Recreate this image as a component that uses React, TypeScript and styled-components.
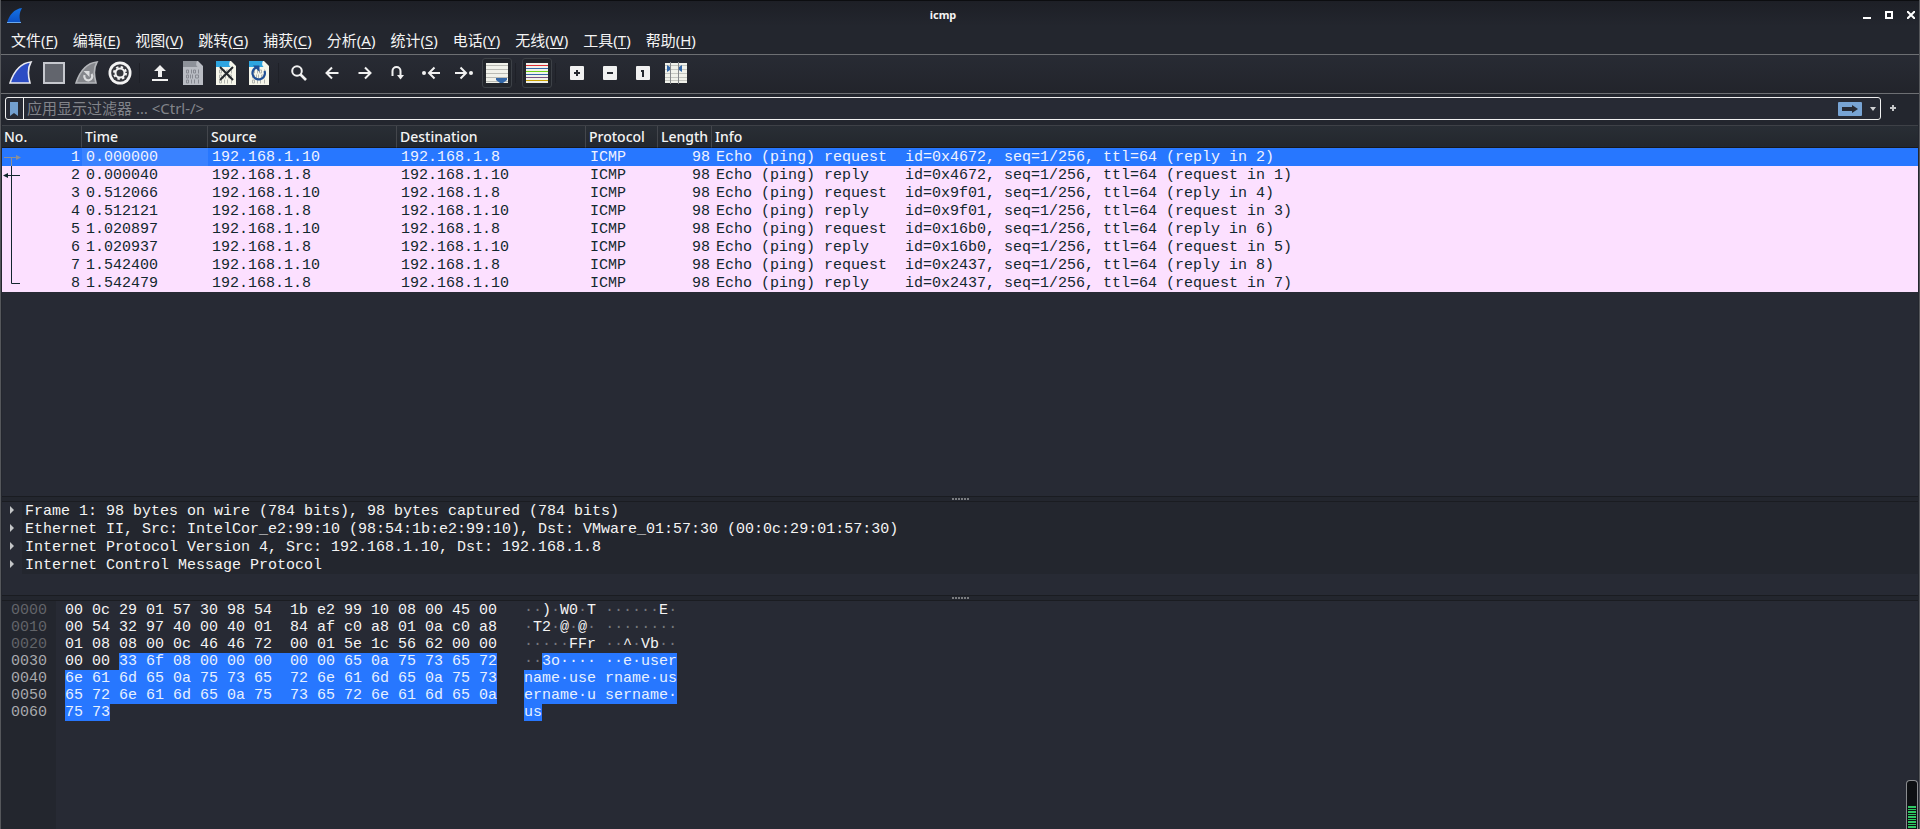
import React from "react";
import styled, { createGlobalStyle, css } from "styled-components";

const ui = `"Noto Sans", "Noto Sans CJK SC", sans-serif`;
const mono = `"Liberation Mono", monospace`;
const base = "#272a34";
const chrome = "#23262e";
const highlight = "#2777ff";

const GlobalStyle = createGlobalStyle`
  * { box-sizing: border-box; }
  html, body { margin: 0; background: ${chrome}; }
  button { font: inherit; color: inherit; background: none; border: 0; padding: 0; }
  svg { display: block; }
`;

const Window = styled.main`
  min-height: 100vh;
  display: flex;
  flex-direction: column;
  border-left: 1px solid #55575b;
  border-right: 1px solid #55575b;
  background: ${chrome};
  color: #f4f4f4;
  font: 15px/20px ${ui};
  overflow: hidden;
`;

const TitleBar = styled.header`
  height: 26px;
  display: flex;
  align-items: center;
  padding: 3px 4px 0 5px;
  border-top: 1px solid #0c0d10;
  background: linear-gradient(#1d1f26, ${chrome});
`;

const Title = styled.h1`
  flex: 1;
  margin: 0;
  text-align: center;
  font: bold 11px/16px ${ui};
`;

const WindowButtons = styled.div`
  display: flex;
  gap: 14px;
`;

const WindowButton = styled.button`
  width: 8px;
  height: 8px;
`;

const MenuBar = styled.nav`
  height: 28px;
  display: flex;
  gap: 15px;
  padding: 4px 10px 0;
`;

const MenuItem = styled.button`
  height: 20px;
  white-space: nowrap;
  line-height: 20px;
  u {
    text-underline-offset: 2px;
    text-decoration-skip-ink: none;
  }
`;

const ToolBar = styled.div`
  height: 40px;
  display: flex;
  align-items: center;
  padding: 0 3px 2px;
  border: 1px solid #6d6f73;
  border-width: 1px 0;
  background: linear-gradient(#282b34, #22242b);
`;

const ToolButton = styled.button<{ $pressed?: boolean }>`
  width: ${(p) => (p.$pressed ? 30 : 33)}px;
  height: 30px;
  display: grid;
  place-items: center;
  ${(p) =>
    p.$pressed &&
    css`
      margin-left: 2px;
      border: 1px solid #3d4147;
      border-radius: 3px;
      background: #22252b;
    `}
`;

const ToolSeparator = styled.span<{ $narrow?: boolean }>`
  width: ${(p) => (p.$narrow ? 8 : 7)}px;
  height: 20px;
  background: linear-gradient(90deg, transparent 3px, #1e2027 3px, #1e2027 4px, transparent 4px);
`;

const FilterBar = styled.div`
  height: 31px;
  display: flex;
  align-items: flex-start;
  gap: 8px;
  padding: 3px 22px 0 4px;
`;

const FilterBox = styled.div`
  flex: 1;
  height: 23px;
  display: flex;
  align-items: center;
  border: 1px solid #f0f0f0;
  border-radius: 3px;
  background: ${base};
`;

const BookmarkButton = styled.button`
  width: 18px;
  height: 21px;
  padding-right: 2px;
  display: grid;
  place-items: center;
  border-right: 1px solid #f0f0f0;
`;

const FilterInput = styled.input`
  flex: 1;
  min-width: 0;
  height: 21px;
  padding: 0 3px 2px;
  border: 0;
  outline: 0;
  background: none;
  color: #f4f4f4;
  font: 15px/20px ${ui};
  &::placeholder {
    color: #82848a;
    opacity: 1;
  }
`;

const FilterAction = styled.button<{ $width: number }>`
  width: ${(p) => p.$width}px;
  height: 21px;
  display: grid;
  place-items: center;
`;

const HistoryButton = styled(FilterAction)`
  padding-left: 4px;
`;

const PacketPane = styled.section`
  flex: 371 1 0;
  min-height: 168px;
  margin: 0 1px;
  border-top: 1px solid #3e4147;
  background: ${base};
  position: relative;
`;

const PacketTable = styled.table`
  width: 100%;
  table-layout: fixed;
  border-collapse: separate;
  border-spacing: 0;
  font: 15px/17px ${mono};
`;

const ColumnHeader = styled.th`
  height: 22px;
  padding: 0 3px;
  border-right: 1px solid #43464c;
  border-bottom: 1px solid #17191d;
  background: linear-gradient(#292e35, #23272d);
  text-align: left;
  font: 500 14px/20px ${ui};
  white-space: nowrap;
  &:first-child {
    padding-left: 2px;
  }
  &:last-child {
    border-right: 0;
  }
`;

const PacketRow = styled.tr<{ $selected: boolean }>`
  background: ${(p) => (p.$selected ? highlight : "#fce0ff")};
  color: ${(p) => (p.$selected ? "#f0f2ff" : "#12272e")};
`;

const PacketCell = styled.td<{ $right?: boolean; $current?: boolean }>`
  height: 18px;
  padding: ${(p) => (p.$right ? "1px 2px 0 0" : "1px 0 0 4px")};
  text-align: ${(p) => (p.$right ? "right" : "left")};
  white-space: pre;
  background: ${(p) => (p.$current ? "#3a82ff" : "none")};
`;

const RelationLines = styled.svg`
  position: absolute;
  left: 0;
  top: 22px;
`;

const Splitter = styled.div`
  height: 6px;
  margin: 0 1px;
  display: grid;
  place-items: center;
  border: 1px solid #1a1c21;
  border-width: 1px 0;
  background: ${chrome};
`;

const DetailPane = styled.section`
  flex: 93 1 0;
  min-height: 72px;
  margin: 0 1px;
  background: ${base};
`;

const DetailList = styled.ul`
  margin: 0;
  padding: 0;
  list-style: none;
  font: 15px/17px ${mono};
`;

const DetailItem = styled.li`
  display: flex;
`;

const ExpandButton = styled.button`
  width: 20px;
  padding-bottom: 2px;
  display: grid;
  place-items: center;
`;

const DetailText = styled.span`
  flex: 1;
  padding: 1px 0 0 3px;
  background: #23262e;
  white-space: pre;
`;

const BytesPane = styled.section`
  flex: 228 1 0;
  min-height: 120px;
  margin: 0 1px;
  display: flex;
  background: ${base};
  font: 15px/17px ${mono};
  white-space: pre;
`;

const OffsetColumn = styled.div`
  width: 54px;
  padding: 1px 0 0 9px;
  background: ${chrome};
`;

const Offset = styled.div<{ $lit: boolean }>`
  color: ${(p) => (p.$lit ? "#a8aaad" : "#626469")};
`;

const HexColumn = styled.div`
  width: 468px;
  padding: 1px 0 0 9px;
`;

const AsciiColumn = styled.div`
  flex: 1;
  padding-top: 1px;
`;

const Marked = styled.span`
  background: ${highlight};
  color: #e6f0ff;
`;

const Faint = styled.span`
  color: #75777c;
`;

const Meter = styled.div`
  position: fixed;
  right: 2px;
  bottom: 0;
  width: 12px;
  height: 49px;
  padding: 25px 1px 0;
  border: 1px solid #8b8d90;
  border-bottom: 0;
  border-radius: 4px 4px 0 0;
  background: #0e1013;
`;

const MeterBars = styled.div`
  height: 23px;
  background: repeating-linear-gradient(#2fc763 0 2px, #0e1013 2px 3px, #2fc763 3px 4px, #0e1013 4px 5px);
`;

/* ---------- icons ---------- */

const fin = "M1 22C5 10 11 2 22 1C18 8 19 15 21 22Z";

const AppIcon = () => (
  <svg width="17" height="17" viewBox="0 0 17 17">
    <defs>
      <linearGradient id="fin" x1="0" y1="0" x2="0" y2="1">
        <stop offset="0" stopColor="#1673e6" />
        <stop offset="1" stopColor="#0a4fc4" />
      </linearGradient>
    </defs>
    <path d="M1 16C3 8 8 2 16 1C13 6 13 11 15 16Z" fill="url(#fin)" />
    <path d="M1 15.500H15" stroke="#6aa9ee" />
  </svg>
);

const StartIcon = () => (
  <svg width="24" height="24" viewBox="0 0 24 24">
    <path d={fin} fill="#2c4cc4" stroke="#e9e9ee" strokeWidth="1.600" />
  </svg>
);

const StopIcon = () => (
  <svg width="24" height="24" viewBox="0 0 24 24">
    <rect x="2" y="2" width="20" height="20" fill="#62656d" stroke="#c6c8ce" strokeWidth="2" />
  </svg>
);

const RestartIcon = () => (
  <svg width="24" height="24" viewBox="0 0 24 24">
    <path d={fin} fill="#85878c" stroke="#b4b6ba" strokeWidth="1.600" />
    <path d="M9.500 14A4 4 0 1 0 16.500 13" fill="none" stroke="#dcdddf" strokeWidth="2.200" />
    <path d="M8.500 10H14.500V16Z" fill="#dcdddf" />
  </svg>
);

const OptionsIcon = () => (
  <svg width="24" height="24" viewBox="0 0 24 24">
    <circle cx="12" cy="12" r="11.500" fill="#f3f3f3" />
    <circle cx="12" cy="12" r="8.800" fill="#34363c" />
    <circle cx="12" cy="12" r="6" fill="none" stroke="#f3f3f3" strokeWidth="2" strokeDasharray="2.400 2.312" />
    <circle cx="12" cy="12" r="4.500" fill="none" stroke="#f3f3f3" strokeWidth="2" />
  </svg>
);

const OpenIcon = () => (
  <svg width="18" height="18" viewBox="0 0 18 18">
    <path d="M9 1L15 7H11V13H7V7H3Z" fill="#f1f1f1" />
    <path d="M1 16H17" stroke="#f1f1f1" strokeWidth="2" />
  </svg>
);

const FileIcon = ({ top, page, mark, children }: { top: string; page: string; mark: string; children?: React.ReactNode }) => (
  <svg width="20" height="24" viewBox="0 0 20 24">
    <path d="M0 0H15L20 5V24H0Z" fill={page} />
    <path d="M0 0H14Q12 5 15 6H0Z" fill={top} />
    <path d="M14 0L20 6H15Q13 4 14 0Z" fill={page} />
    <g fill="none" stroke={mark} strokeWidth="1" opacity="0.8">
      <path d="M3.500 9V12H5.500V9ZM8.500 8.500V12.500M10.500 9V12H12.500V9ZM15.500 8.500V12.500" />
      <path d="M3.500 14V17H5.500V14ZM7.500 13.500V17.500M9.500 13.500V17.500M12.500 14V17H15.500V14Z" />
      <path d="M3.500 19V22H5.500V19ZM8.500 18.500V22.500M11.500 18.500V22.500M15.500 18.500V22.500" />
    </g>
    {children}
  </svg>
);

const SaveIcon = () => <FileIcon top="#8d9199" page="#b9bcc3" mark="#7b7e86" />;

const CloseIcon = () => (
  <FileIcon top="#2ea5e0" page="#f6f6ea" mark="#a3a5a1">
    <path d="M4 6L17 19M17 6L4 19" stroke="#23272b" strokeWidth="2" />
  </FileIcon>
);

const ReloadIcon = () => (
  <FileIcon top="#2ea5e0" page="#f6f6ea" mark="#a3a5a1">
    <path d="M9 6A6.200 6.200 0 1 0 15.500 10" fill="none" stroke="#1f4f96" strokeWidth="2.200" />
    <path d="M4 4.500H10.500V11Z" fill="#1f4f96" />
  </FileIcon>
);

const FindIcon = () => (
  <svg width="18" height="18" viewBox="0 0 18 18" fill="none" stroke="#f1f1f1">
    <circle cx="7" cy="7" r="4.800" strokeWidth="2" />
    <path d="M10.500 10.500L16 16" strokeWidth="2.600" />
  </svg>
);

const Arrow = ({ dot, flip }: { dot?: boolean; flip?: boolean }) => (
  <svg width="20" height="16" viewBox="0 0 20 16">
    <g transform={flip ? "translate(20 0) scale(-1 1)" : undefined} fill="none" stroke="#f1f1f1" strokeWidth="2">
      {dot ? (
        <>
          <path d="M19 8H9M13.500 2.500L8 8L13.500 13.500" />
          <circle cx="3" cy="8" r="2" fill="#f1f1f1" stroke="none" />
        </>
      ) : (
        <path d="M16.500 8H5.500M10 2.500L4.500 8L10 13.500" />
      )}
    </g>
  </svg>
);

const GoToIcon = () => (
  <svg width="16" height="16" viewBox="0 0 16 16">
    <path d="M2.500 11V6A4 4 0 0 1 10.500 6V11" fill="none" stroke="#f1f1f1" strokeWidth="2" />
    <path d="M7 10H14L10.500 14.500Z" fill="#f1f1f1" />
  </svg>
);

const AutoScrollIcon = () => (
  <svg width="22" height="20" viewBox="0 0 22 20">
    <path d="M0 0H22V20H0Z" fill="#f0f1ea" />
    <path d="M0 2.500H22M0 6.500H22M0 10.500H22M0 14.500H22M0 18.500H22" stroke="#b9bab4" />
    <path d="M10 15H21V17L17 20H14L10 17Z" fill="#3367a8" />
  </svg>
);

const ColorizeIcon = () => (
  <svg width="22" height="20" viewBox="0 0 22 20">
    <path d="M0 0H22V20H0Z" fill="#f0f1ea" />
    <path d="M0 2.500H22" stroke="#e02f35" />
    <path d="M0 5.500H22M0 11.500H22" stroke="#3367a8" />
    <path d="M0 8.500H22" stroke="#72d216" />
    <path d="M0 14.500H22" stroke="#755080" />
    <path d="M0 17.500H22" stroke="#c8a000" />
  </svg>
);

const ZoomTile = ({ d }: { d: string }) => (
  <svg width="14" height="14" viewBox="0 0 14 14">
    <rect width="14" height="14" rx="1" fill="#f1f1f1" />
    <path d={d} fill="none" stroke="#25282f" strokeWidth="2" />
  </svg>
);

const ColumnsIcon = () => (
  <svg width="22" height="22" viewBox="0 0 22 22">
    <path d="M0 1H22V21H0Z" fill="#f0f1ea" />
    <path d="M0 3.500H22M0 7.500H22M0 11.500H22M0 15.500H22M0 18.500H22" stroke="#c4c5bf" />
    <path d="M5.500 0V22M13.500 0V22" stroke="#85878a" />
    <path d="M2 3L5 5V8L2 10ZM17 3L14 5V8L17 10Z" fill="#3367a8" />
  </svg>
);

const Grip = () => (
  <svg width="17" height="2" viewBox="0 0 17 2">
    <path d="M0 1H17" stroke="#7a7c80" strokeWidth="2" strokeDasharray="2 1" />
  </svg>
);

/* ---------- data ---------- */

const menus: [string, string][] = [
  ["文件", "F"], ["编辑", "E"], ["视图", "V"], ["跳转", "G"], ["捕获", "C"], ["分析", "A"],
  ["统计", "S"], ["电话", "Y"], ["无线", "W"], ["工具", "T"], ["帮助", "H"],
];

const columns: [string, number | undefined][] = [
  ["No.", 80], ["Time", 126], ["Source", 189], ["Destination", 189], ["Protocol", 72], ["Length", 54], ["Info", undefined],
];

const times = ["0.000000", "0.000040", "0.512066", "0.512121", "1.020897", "1.020937", "1.542400", "1.542479"];
const ids = ["4672", "9f01", "16b0", "2437"];

const packets = times.map((time, i) => {
  const request = i % 2 === 0;
  return {
    no: i + 1,
    time,
    source: request ? "192.168.1.10" : "192.168.1.8",
    destination: request ? "192.168.1.8" : "192.168.1.10",
    info:
      `Echo (ping) ${request ? "request" : "reply  "}  id=0x${ids[i >> 1]}, seq=1/256, ttl=64 ` +
      (request ? `(reply in ${i + 2})` : `(request in ${i})`),
  };
});

const details = [
  "Frame 1: 98 bytes on wire (784 bits), 98 bytes captured (784 bits)",
  "Ethernet II, Src: IntelCor_e2:99:10 (98:54:1b:e2:99:10), Dst: VMware_01:57:30 (00:0c:29:01:57:30)",
  "Internet Protocol Version 4, Src: 192.168.1.10, Dst: 192.168.1.8",
  "Internet Control Message Protocol",
];

/* plain hex, marked hex, plain text, marked text */
const bytes: [string, string, string, string][] = [
  ["00 0c 29 01 57 30 98 54  1b e2 99 10 08 00 45 00", "", "··)·W0·T ······E·", ""],
  ["00 54 32 97 40 00 40 01  84 af c0 a8 01 0a c0 a8", "", "·T2·@·@· ········", ""],
  ["01 08 08 00 0c 46 46 72  00 01 5e 1c 56 62 00 00", "", "·····FFr ··^·Vb··", ""],
  ["00 00 ", "33 6f 08 00 00 00  00 00 65 0a 75 73 65 72", "··", "3o···· ··e·user"],
  ["", "6e 61 6d 65 0a 75 73 65  72 6e 61 6d 65 0a 75 73", "", "name·use rname·us"],
  ["", "65 72 6e 61 6d 65 0a 75  73 65 72 6e 61 6d 65 0a", "", "ername·u sername·"],
  ["", "75 73", "", "us"],
];

const tools: { label: string; icon?: React.ReactNode; pressed?: boolean; narrow?: boolean }[] = [
  { label: "Start", icon: <StartIcon /> },
  { label: "Stop", icon: <StopIcon /> },
  { label: "Restart", icon: <RestartIcon /> },
  { label: "Options", icon: <OptionsIcon /> },
  { label: "" },
  { label: "Open", icon: <OpenIcon /> },
  { label: "Save", icon: <SaveIcon /> },
  { label: "Close", icon: <CloseIcon /> },
  { label: "Reload", icon: <ReloadIcon /> },
  { label: "" },
  { label: "Find", icon: <FindIcon /> },
  { label: "Previous", icon: <Arrow /> },
  { label: "Next", icon: <Arrow flip /> },
  { label: "Go to", icon: <GoToIcon /> },
  { label: "First", icon: <Arrow dot /> },
  { label: "Last", icon: <Arrow dot flip /> },
  { label: "Auto scroll", icon: <AutoScrollIcon />, pressed: true },
  { label: "", narrow: true },
  { label: "Colorize", icon: <ColorizeIcon />, pressed: true },
  { label: "", narrow: true },
  { label: "Zoom in", icon: <ZoomTile d="M4 7H10M7 4V10" /> },
  { label: "Zoom out", icon: <ZoomTile d="M4 7H10" /> },
  { label: "Normal size", icon: <ZoomTile d="M5 5H7V11" /> },
  { label: "Resize columns", icon: <ColumnsIcon /> },
];

const faintDots = (text: string) =>
  text.split(/(·+)/).map((part, i) => (part.startsWith("·") ? <Faint key={i}>{part}</Faint> : part));

export default function App() {
  return (
    <Window>
      <GlobalStyle />
      <TitleBar>
        <AppIcon />
        <Title>icmp</Title>
        <WindowButtons>
          <WindowButton aria-label="Minimize">
            <svg width="8" height="8"><path d="M0 7H8" stroke="#fff" strokeWidth="2" /></svg>
          </WindowButton>
          <WindowButton aria-label="Maximize">
            <svg width="8" height="8"><path d="M1 1H7V7H1Z" fill="none" stroke="#fff" strokeWidth="2" /></svg>
          </WindowButton>
          <WindowButton aria-label="Close window">
            <svg width="8" height="8"><path d="M0 0L8 8M8 0L0 8" stroke="#fff" strokeWidth="2" /></svg>
          </WindowButton>
        </WindowButtons>
      </TitleBar>
      <MenuBar>
        {menus.map(([name, key]) => (
          <MenuItem key={key}>{name}(<u>{key}</u>)</MenuItem>
        ))}
      </MenuBar>
      <ToolBar>
        {tools.map((t, i) =>
          t.icon ? (
            <ToolButton key={i} aria-label={t.label} $pressed={t.pressed}>{t.icon}</ToolButton>
          ) : (
            <ToolSeparator key={i} $narrow={t.narrow} />
          )
        )}
      </ToolBar>
      <FilterBar>
        <FilterBox>
          <BookmarkButton aria-label="Bookmark">
            <svg width="8" height="14"><path d="M0 0H8V14L4 11L0 14Z" fill="#729fcf" /></svg>
          </BookmarkButton>
          <FilterInput aria-label="应用显示过滤器" placeholder="应用显示过滤器 … <Ctrl-/>" />
          <FilterAction $width={24} aria-label="Apply">
            <svg width="24" height="14">
              <rect width="24" height="14" rx="1" fill="#78a4d4" />
              <path d="M4 5H14V3L20 7L14 11V9H4Z" fill="#272a34" />
            </svg>
          </FilterAction>
          <HistoryButton $width={18} aria-label="Filter history">
            <svg width="6" height="4"><path d="M0 0H6L3 4Z" fill="#d0d1d3" /></svg>
          </HistoryButton>
        </FilterBox>
        <FilterAction $width={8} aria-label="Add filter button">
          <svg width="8" height="8"><path d="M1 4H7M4 1V7" stroke="#c4c6c8" strokeWidth="2" /></svg>
        </FilterAction>
      </FilterBar>
      <PacketPane>
        <PacketTable>
          <colgroup>
            {columns.map(([name, width]) => <col key={name} width={width} />)}
          </colgroup>
          <thead>
            <tr>{columns.map(([name]) => <ColumnHeader key={name}>{name}</ColumnHeader>)}</tr>
          </thead>
          <tbody>
            {packets.map((p) => (
              <PacketRow key={p.no} $selected={p.no === 1}>
                <PacketCell $right>{p.no}</PacketCell>
                <PacketCell $current={p.no === 1}>{p.time}</PacketCell>
                <PacketCell>{p.source}</PacketCell>
                <PacketCell>{p.destination}</PacketCell>
                <PacketCell>ICMP</PacketCell>
                <PacketCell $right>98</PacketCell>
                <PacketCell>{p.info}</PacketCell>
              </PacketRow>
            ))}
          </tbody>
        </PacketTable>
        <RelationLines width="20" height="144" fill="none">
          <path d="M2 9.500H15M9.500 9V18" stroke="#8d9097" />
          <path d="M14 7L19 9.500L14 12Z" fill="#8d9097" />
          <path d="M9.500 18V135.500H18M5 27.500H18" stroke="#12272e" />
          <path d="M6 25L1 27.500L6 30Z" fill="#12272e" />
        </RelationLines>
      </PacketPane>
      <Splitter><Grip /></Splitter>
      <DetailPane>
        <DetailList>
          {details.map((line) => (
            <DetailItem key={line}>
              <ExpandButton aria-label="Expand">
                <svg width="4" height="8"><path d="M0 0L4 4L0 8Z" fill="#c4c6c8" /></svg>
              </ExpandButton>
              <DetailText>{line}</DetailText>
            </DetailItem>
          ))}
        </DetailList>
      </DetailPane>
      <Splitter><Grip /></Splitter>
      <BytesPane>
        <OffsetColumn>
          {bytes.map((_, i) => <Offset key={i} $lit={i > 2}>{`00${i}0`}</Offset>)}
        </OffsetColumn>
        <HexColumn>
          {bytes.map(([plain, marked], i) => <div key={i}>{plain}<Marked>{marked}</Marked></div>)}
        </HexColumn>
        <AsciiColumn>
          {bytes.map(([, , plain, marked], i) => <div key={i}>{faintDots(plain)}<Marked>{marked}</Marked></div>)}
        </AsciiColumn>
      </BytesPane>
      <Meter><MeterBars /></Meter>
    </Window>
  );
}
